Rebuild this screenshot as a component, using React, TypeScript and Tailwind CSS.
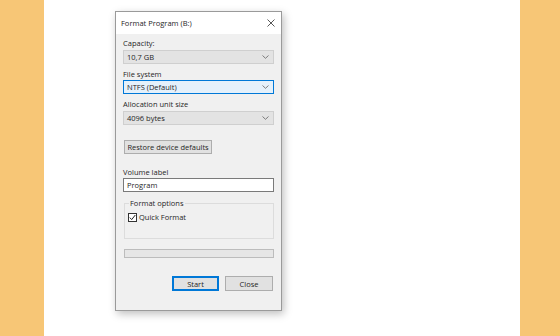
import React from "react";

const Chevron = () => (
  <svg width="7" height="4" viewBox="0 0 7 4" className="shrink-0">
    <path d="M0.5 0.5 L3.5 3.3 L6.5 0.5" fill="none" stroke="#707070" strokeWidth="0.9" />
  </svg>
);

const Combo = ({ value, active }: { value: string; active?: boolean }) => (
  <div
    className={
      "flex h-[14px] items-center justify-between border pl-[3px] pr-[4px] " +
      (active ? "border-[#0078d7] bg-[#e5f1fb]" : "border-[#cfcfcf] bg-[#e3e3e3]")
    }
  >
    <span>{value}</span>
    <Chevron />
  </div>
);

export default function App() {
  return (
    <div
      className="flex h-[336px] w-[560px] bg-white text-[7.5px] leading-[10px] text-[#262626]"
      style={{ fontFamily: '"Open Sans", "Noto Sans", sans-serif' }}
    >
      <div className="w-[44px] bg-[#f7c676]" />
      <div className="flex-1 bg-white pl-[71px] pt-[11px]">
        <div className="flex h-[300px] w-[167px] flex-col border border-[#9a9a9a] bg-[#f0f0f0] shadow-[2px_3px_8px_rgba(0,0,0,0.25)]">
          <div className="flex h-[22px] items-center justify-between bg-white pl-[5px] pr-[6px]">
            <span>Format Program (B:)</span>
            <svg width="8" height="8" viewBox="0 0 8 8">
              <path d="M0.5 0.5 L7.5 7.5 M7.5 0.5 L0.5 7.5" stroke="#444" strokeWidth="0.9" />
            </svg>
          </div>
          <div className="flex flex-1 flex-col px-[7px] pt-[4px]">
            <div>Capacity:</div>
            <div className="mt-[2px]">
              <Combo value="10,7 GB" />
            </div>
            <div className="mt-[5px]">File system</div>
            <div className="mt-[1px]">
              <Combo value="NTFS (Default)" active />
            </div>
            <div className="mt-[5px]">Allocation unit size</div>
            <div className="mt-[2px]">
              <Combo value="4096 bytes" />
            </div>
            <div className="mt-[15px] pl-[1px]">
              <div className="flex h-[14px] w-[88px] items-center justify-center whitespace-nowrap border border-[#adadad] bg-[#e1e1e1]">
                Restore device defaults
              </div>
            </div>
            <div className="mt-[13px]">Volume label</div>
            <div className="mt-[1px] flex h-[14px] items-center border border-[#7a7a7a] bg-white pl-[3px]">
              Program
            </div>
            <div className="relative mt-[11px] ml-[1px] h-[36px] border border-[#dcdcdc]">
              <span className="absolute -top-[6px] left-[4px] bg-[#f0f0f0] px-[1px]">
                Format options
              </span>
              <div className="mt-[8px] ml-[3px] flex items-center gap-[2px]">
                <div className="flex h-[9px] w-[9px] items-center justify-center border border-[#333] bg-white">
                  <svg width="7" height="7" viewBox="0 0 7 7">
                    <path d="M0.8 3.6 L2.7 5.6 L6.3 1" fill="none" stroke="#222" strokeWidth="1" />
                  </svg>
                </div>
                <span>Quick Format</span>
              </div>
            </div>
            <div className="mt-[10px] ml-[1px] h-[9px] border border-[#bcbcbc] bg-[#e6e6e6]" />
            <div className="mt-[18px] flex justify-end gap-[6px] pr-[1px]">
              <div className="flex h-[15px] w-[47px] items-center justify-center border border-[#0078d7] bg-[#e1e1e1] shadow-[inset_0_0_0_1px_#0078d7]">
                Start
              </div>
              <div className="flex h-[15px] w-[48px] items-center justify-center border border-[#adadad] bg-[#e1e1e1]">
                Close
              </div>
            </div>
          </div>
        </div>
      </div>
      <div className="w-[40px] bg-[#f7c676]" />
    </div>
  );
}
